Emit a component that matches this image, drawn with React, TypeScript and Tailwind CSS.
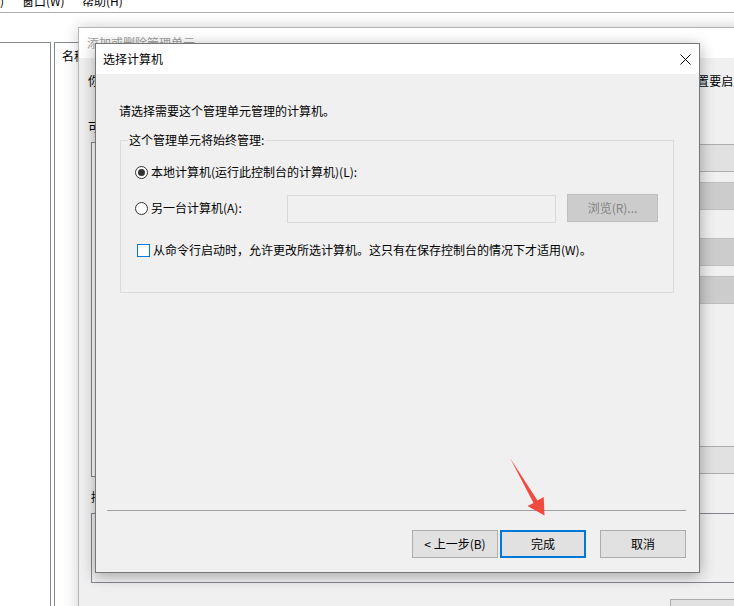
function Radio({ checked }: { checked?: boolean }) {
  return (
    <span className="flex h-[13px] w-[13px] shrink-0 items-center justify-center rounded-full border border-[#333333] bg-white">
      {checked && <span className="h-[7px] w-[7px] rounded-full bg-[#333333]" />}
    </span>
  );
}

function WinButton({
  children,
  className,
  primary,
}: {
  children?: React.ReactNode;
  className?: string;
  primary?: boolean;
}) {
  return (
    <div
      className={`flex h-[28px] w-[86px] items-center justify-center bg-[#e1e1e1] ${
        primary ? "border-2 border-[#0078d7]" : "border border-[#adadad]"
      } ${className ?? ""}`}
    >
      {children}
    </div>
  );
}

function MainWindow() {
  return (
    <div className="flex h-full flex-col">
      <div className="h-[13px] overflow-hidden border-b border-[#b0b0b0]">
        <div className="-mt-[7px] flex h-[16px] items-center whitespace-nowrap">
          <span className="w-[22px]">)</span>
          <span className="w-[60px]">窗口(W)</span>
          <span>帮助(H)</span>
        </div>
      </div>
      <div className="h-[29px] shrink-0" />
      <div className="flex flex-1">
        <div className="w-[51px] border-r border-t border-[#828790]" />
        <div className="ml-[3px] flex-1 border-l border-t border-[#828790] pl-[7px] pt-[5px]">名称</div>
      </div>
    </div>
  );
}

function SnapinDialog() {
  return (
    <div className="absolute left-[78px] top-[27px] flex h-[640px] w-[720px] flex-col border border-[#b4b4b4] bg-[#f0f0f0] shadow-[0_0_14px_rgba(0,0,0,0.2)]">
      <div className="flex h-[30px] shrink-0 items-center bg-white pl-[8px] text-[#a0a0a0]">添加或删除管理单元</div>
      <div className="flex flex-col pl-[9px]">
        <p className="mt-[15px] whitespace-nowrap tracking-[0.18px]">
          你可以在计算机上为此控制台选择可用的管理单元并配置所选的一组管理单元。对于可扩展的管理单元，你可以配置要启用哪些扩展。
        </p>
        <p className="mt-[30px]">可用的管理单元(S):</p>
        <div className="mt-[7px] flex h-[335px]">
          <div className="ml-[3px] w-[550px] border border-[#828790] bg-white" />
          <div className="ml-[18px] flex w-[110px] flex-col">
            <div className="mt-[2px] h-[28px] border border-[#adadad] bg-[#e1e1e1]" />
            <div className="mt-[10px] h-[28px] border border-[#bfbfbf] bg-[#cccccc]" />
            <div className="mt-[28px] h-[28px] border border-[#bfbfbf] bg-[#cccccc]" />
            <div className="mt-[10px] h-[28px] border border-[#bfbfbf] bg-[#cccccc]" />
            <div className="mt-[142px] h-[28px] border border-[#adadad] bg-[#e1e1e1]" />
          </div>
        </div>
        <p className="ml-[3px] mt-[12px]">描述:</p>
        <div className="ml-[3px] mt-[8px] h-[70px] border border-[#828790] bg-[#f0f0f0]" />
        <div className="ml-[582px] mt-[16px] h-[23px] w-[75px] border border-[#adadad] bg-[#e1e1e1]" />
      </div>
    </div>
  );
}

function ChooseComputerDialog() {
  return (
    <div className="absolute left-[95px] top-[43px] flex h-[530px] w-[605px] flex-col border border-[#777777] bg-[#f0f0f0] shadow-[0_3px_14px_rgba(0,0,0,0.32)]">
      <div className="flex h-[30px] shrink-0 items-center justify-between bg-white pl-[7px] pr-[8px]">
        <span>选择计算机</span>
        <svg width="11" height="11" viewBox="0 0 11 11" fill="none" stroke="#000" strokeWidth="1">
          <path d="M0.5 0.5L10.5 10.5M10.5 0.5L0.5 10.5" />
        </svg>
      </div>

      <div className="flex flex-1 flex-col">
        <p className="ml-[23px] mt-[29px]">请选择需要这个管理单元管理的计算机。</p>

        <div className="relative ml-[24px] mr-[25px] mt-[21px] h-[153px] border border-[#dcdcdc] pl-[14px] pt-[23px]">
          <span className="absolute left-[7px] top-[-9px] bg-[#f0f0f0] px-[1px]">这个管理单元将始终管理:</span>

          <div className="flex h-[16px] items-center">
            <Radio checked />
            <span className="ml-[3px]">本地计算机(运行此控制台的计算机)(L):</span>
          </div>

          <div className="mt-[14px] flex h-[28px] items-start">
            <div className="flex h-[28px] w-[152px] items-center">
              <Radio />
              <span className="ml-[3px]">另一台计算机(A):</span>
            </div>
            <div className="mt-[1px] h-[28px] w-[269px] border border-[#d9d9d9]" />
            <div className="ml-[11px] flex h-[28px] w-[91px] items-center justify-center border border-[#bfbfbf] bg-[#cccccc] text-[#838383]">
              浏览(R)...
            </div>
          </div>

          <div className="ml-[2px] mt-[20px] flex h-[16px] items-center">
            <span className="h-[13px] w-[13px] shrink-0 border border-[#0078d7] bg-white" />
            <span className="ml-[3px] whitespace-nowrap">
              从命令行启动时，允许更改所选计算机。这只有在保存控制台的情况下才适用(W)。
            </span>
          </div>
        </div>

        <div className="flex-1" />
        <div className="ml-[11px] mr-[13px] h-px bg-[#a0a0a0]" />
        <div className="mb-[14px] mr-[13px] mt-[19px] flex justify-end">
          <WinButton>{"< 上一步(B)"}</WinButton>
          <WinButton primary className="ml-[2px]">完成</WinButton>
          <WinButton className="ml-[14px]">取消</WinButton>
        </div>
      </div>
    </div>
  );
}

function Arrow() {
  return (
    <svg className="pointer-events-none absolute left-0 top-0" width="734" height="606" viewBox="0 0 734 606">
      <polygon points="510,458 537.5,500.5 543.7,497 544.5,515.5 527.5,506 533.5,503" fill="#f04b3f" />
    </svg>
  );
}

export default function App() {
  return (
    <div className="relative h-[606px] w-[734px] overflow-hidden bg-white font-['Noto_Sans_CJK_SC',sans-serif] text-[12px] leading-[16px] text-black">
      <MainWindow />
      <SnapinDialog />
      <ChooseComputerDialog />
      <Arrow />
    </div>
  );
}
